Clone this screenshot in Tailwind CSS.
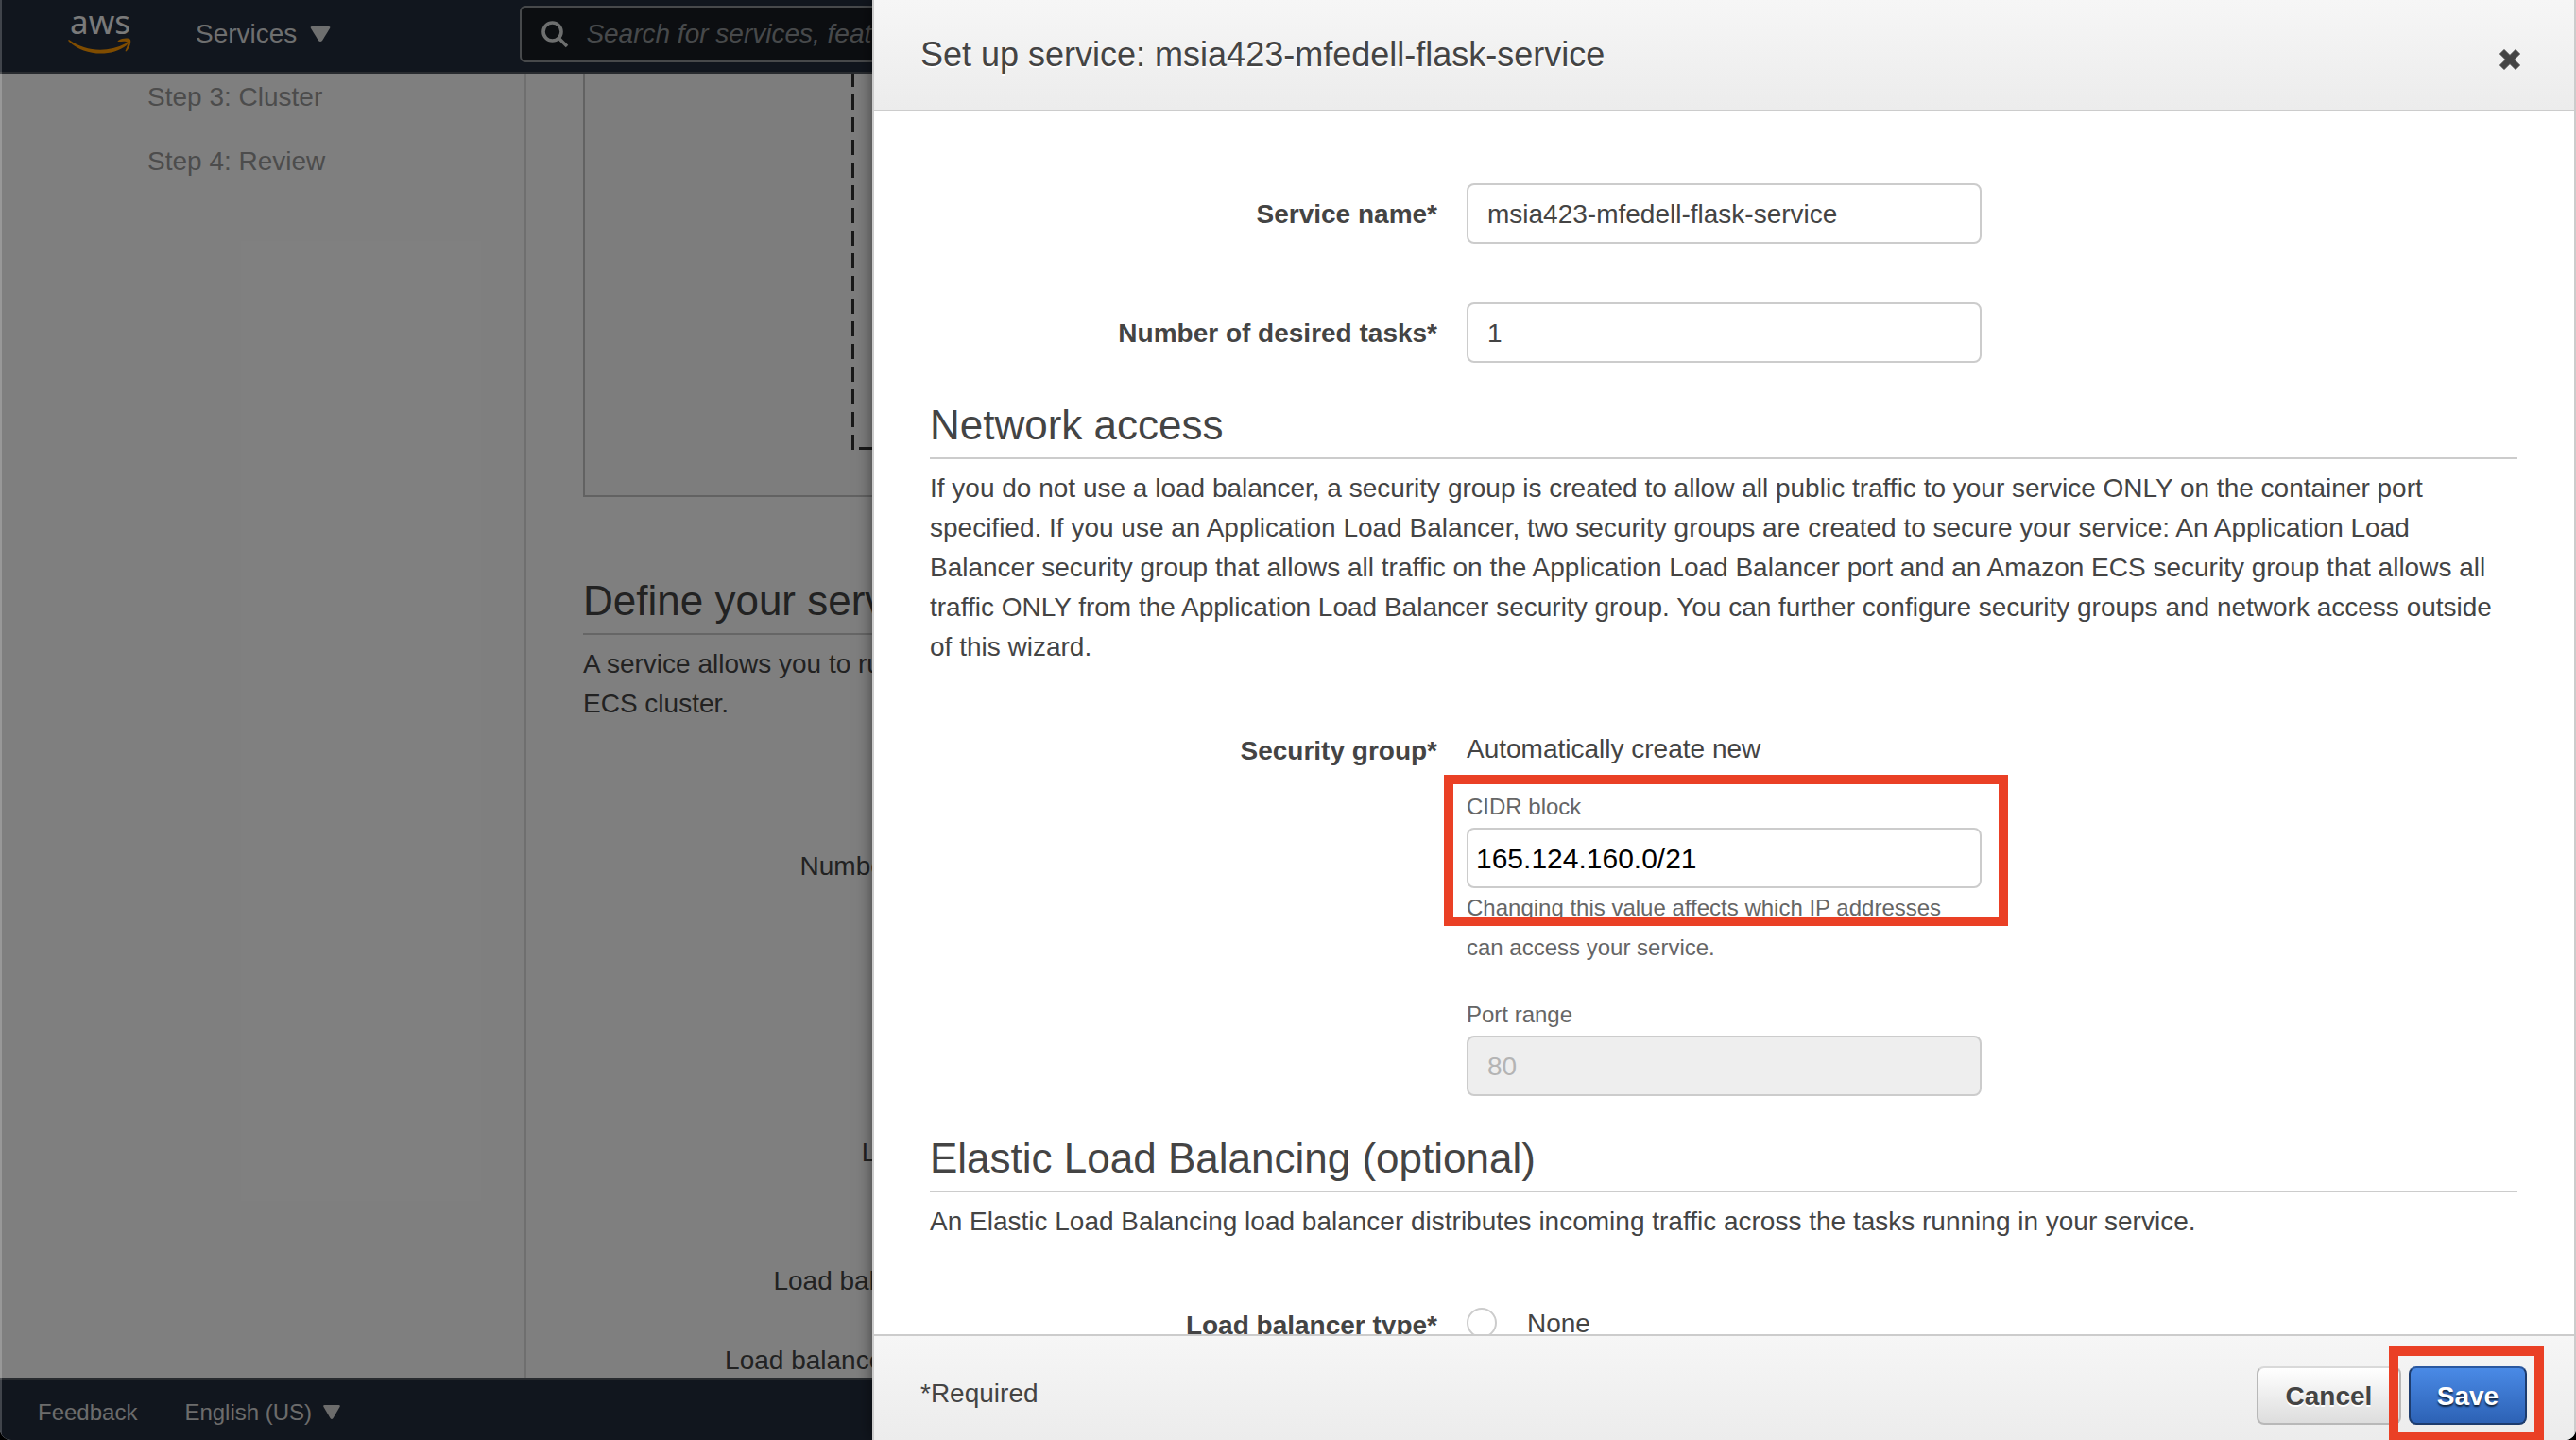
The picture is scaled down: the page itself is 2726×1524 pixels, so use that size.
<!DOCTYPE html>
<html lang="en">
<head>
<meta charset="utf-8">
<title>Set up service</title>
<script src="https://cdn.jsdelivr.net/npm/@tailwindcss/browser@4"></script>
</head>
<body class="h-screen overflow-hidden bg-black font-['Helvetica_Neue','Liberation_Sans',Arial,sans-serif] text-[28px] leading-[42px] text-[#444]">
<div class="relative h-screen overflow-hidden rounded-b-xl bg-white">

  <!-- Console page behind the dialog -->
  <div class="flex h-full flex-col">
    <header class="flex h-[78px] shrink-0 items-center border-b-2 border-[#50565e] bg-[#232c3c] pb-1 text-[#dcdedf]">
      <a href="#" aria-label="aws" class="ml-[70px] block">
        <svg class="h-12 w-[72px] overflow-visible" viewBox="0 0 72 48">
          <text x="36" y="24" text-anchor="middle" font-family="Noto Sans, sans-serif" font-size="35" fill="#f4f4f4">aws</text>
          <path d="M3 30C21 43 44 44 63 34c2-1 3 0 1 2C47 49 19 47 3 32c-1-1-1-2 0-2z" fill="#f90"/>
          <path d="M55 31c5-3 11-3 13-1 1 3-1 9-4 12-1 1-2 0-1-1 1-3 3-7 2-8-2-2-6-1-9-1-1 0-2 0-1-1z" fill="#f90"/>
        </svg>
      </a>
      <button type="button" class="ml-[65px] flex items-center gap-[14px]">Services
        <svg class="h-[18px] w-[22px]" viewBox="0 0 22 18"><path d="M2 1h18q2 0 1 2l-8 13q-2 2-4 0L1 3Q0 1 2 1z" fill="currentColor"/></svg>
      </button>
      <div class="ml-[200px] flex h-[60px] flex-1 items-center gap-[18px] rounded-md border-2 border-[#8f9396] bg-[#181d22] px-5">
        <svg class="h-[30px] w-[30px] shrink-0" viewBox="0 0 30 30" fill="none" stroke="#dcdedf" stroke-width="3.6"><circle cx="12.500" cy="12.500" r="9.500"/><path d="M19 19l9 9"/></svg>
        <input type="text" aria-label="Search" placeholder="Search for services, features" class="flex-1 bg-transparent italic placeholder:text-[#8f9396]">
      </div>
    </header>

    <div class="flex min-h-0 flex-1 overflow-hidden">
      <nav class="flex w-[557px] shrink-0 flex-col gap-[26px] border-r-2 border-[#dedede] pl-[156px] pt-1 text-[#999]">
        <a href="#">Step 3: Cluster</a>
        <a href="#">Step 4: Review</a>
      </nav>
      <main class="flex-1 pl-[60px]">
        <div class="h-[448px] border-2 border-t-0 border-[#c4c4c4] bg-[#fafafa] pl-[282px]">
          <svg class="h-[400px] w-[300px]" viewBox="0 0 300 400" fill="none" stroke="#333" stroke-width="3"><path d="M1.500 -2V398" stroke-dasharray="16 8"/><path d="M8 396.500H300" stroke-dasharray="16 8"/></svg>
        </div>
        <h2 class="mt-[84px] whitespace-nowrap border-b-2 border-[#ccc] pb-2 text-[44px] leading-[52px]">Define your service</h2>
        <p class="mt-[10px] whitespace-nowrap">A service allows you to run<br>ECS cluster.</p>
        <div class="w-[533px] whitespace-nowrap text-right">
          <p class="mt-[130px]">Number of desired tasks</p>
          <p class="mt-[261px]">Load balancer type</p>
          <p class="mt-[94px]">Load balancer listener port</p>
          <p class="mt-[42px]">Load balancer listener protocol</p>
        </div>
      </main>
    </div>

    <footer class="flex h-[66px] shrink-0 items-center border-t-2 border-[#50565e] bg-[#232c3c] pl-10 pt-[6px] text-[24px] text-[#d8d8d8]">
      <a href="#">Feedback</a>
      <button type="button" class="ml-[50px] flex items-center gap-3">English (US)
        <svg class="h-4 w-[18px]" viewBox="0 0 18 16"><path d="M1.500 0h15q2 0 1 2l-7 12q-1.500 2-3 0L.5 2Q-.5 0 1.500 0z" fill="currentColor"/></svg>
      </button>
    </footer>
  </div>

  <div class="absolute inset-0 bg-black/50"></div>
  <div class="absolute inset-y-0 left-0 w-[2px] bg-white/20"></div>

  <!-- Service dialog -->
  <section role="dialog" aria-labelledby="dialog-title" class="absolute inset-y-0 left-[923px] right-0 flex flex-col border-x-2 border-[#ccc] bg-white shadow-[0_0_16px_rgba(0,0,0,0.5)]">
    <header class="flex h-[118px] shrink-0 items-center justify-between border-b-2 border-[#ccc] bg-linear-to-b from-[#f6f6f6] to-[#ececec] pl-[49px] pr-14">
      <h1 id="dialog-title" class="text-[36px] [text-shadow:0_2px_0_#fff]">Set up service: msia423-mfedell-flask-service</h1>
      <button type="button" aria-label="Close" class="pt-[10px]">
        <svg class="h-[24px] w-[24px]" viewBox="0 0 24 24"><path d="M6 1.500L12 7.500 18 1.500 22.500 6 16.500 12 22.500 18 18 22.500 12 16.500 6 22.500 1.500 18 7.500 12 1.500 6z" fill="#444" stroke="#444" stroke-width="1" stroke-linejoin="round"/></svg>
      </button>
    </header>

    <form id="service-form" class="min-h-0 flex-1 overflow-hidden pl-[59px] pr-[60px] pt-[76px]">
      <div class="grid grid-cols-[537px_545px] items-center gap-x-[31px] gap-y-[62px]">
        <label for="service-name" class="pt-[2px] text-right font-bold">Service name*</label>
        <input id="service-name" type="text" value="msia423-mfedell-flask-service" class="h-16 w-full rounded-lg border-2 border-[#ccc] px-5 pt-[2px]">
        <label for="tasks" class="pt-[2px] text-right font-bold">Number of desired tasks*</label>
        <input id="tasks" type="text" value="1" class="h-16 w-full rounded-lg border-2 border-[#ccc] px-5 pt-[2px]">
      </div>

      <h2 class="mt-10 border-b-2 border-[#ccc] pb-2 text-[44px] leading-[52px]">Network access</h2>
      <p class="mt-[10px]">If you do not use a load balancer, a security group is created to allow all public traffic to your service ONLY on the container port specified. If you use an Application Load Balancer, two security groups are created to secure your service: An Application Load Balancer security group that allows all traffic on the Application Load Balancer port and an Amazon ECS security group that allows all traffic ONLY from the Application Load Balancer security group. You can further configure security groups and network access outside of this wizard.</p>

      <div class="mt-[66px] grid grid-cols-[537px_545px] gap-x-[31px]">
        <div class="pt-[2px] text-right font-bold">Security group*</div>
        <div>
          <p>Automatically create new</p>
          <div class="relative mt-[18px] text-[24px] text-[#666]">
            <label for="cidr" class="mb-[2px] block pt-px leading-[41px]">CIDR block</label>
            <input id="cidr" type="text" value="165.124.160.0/21" class="block h-16 w-full rounded-lg border-2 border-[#ccc] px-2 pt-[2px] text-[30px] text-black">
            <p>Changing this value affects which IP addresses can access your service.</p>
            <div class="pointer-events-none absolute -left-6 -right-7 -top-3 h-40 border-10 border-[#ea4025]"></div>
          </div>
          <div class="mt-7 text-[24px] text-[#666]">
            <label for="port" class="mb-[2px] block pt-px leading-[41px]">Port range</label>
            <input id="port" type="text" value="80" disabled class="block h-16 w-full rounded-lg border-2 border-[#ccc] bg-[#eee] px-5 pt-[2px] text-[28px] text-[#b4b4b4]">
          </div>
        </div>
      </div>

      <h2 class="mt-10 border-b-2 border-[#ccc] pb-2 text-[44px] leading-[52px]">Elastic Load Balancing (optional)</h2>
      <p class="mt-[10px]">An Elastic Load Balancing load balancer distributes incoming traffic across the tasks running in your service.</p>

      <div class="mt-[66px] grid grid-cols-[537px_545px] gap-x-[31px]">
        <div class="pt-[2px] text-right font-bold">Load balancer type*</div>
        <label class="flex items-start gap-8"><input type="radio" name="lb" class="mt-1 h-8 w-8 appearance-none rounded-full border-2 border-[#ccc] bg-white">None</label>
      </div>
    </form>

    <footer class="flex h-[112px] shrink-0 items-start justify-between border-t-2 border-[#ccc] bg-linear-to-b from-[#f6f6f6] to-[#ececec] pl-[49px] pr-[50px] pt-8">
      <p class="leading-[58px]">*Required</p>
      <div class="flex gap-2 font-bold">
        <button type="button" class="h-[62px] w-[153px] rounded-lg border-2 border-[#b8b8b8] border-t-[#d9d9d9] bg-linear-to-b from-white to-[#dddddd] pt-[2px] [text-shadow:0_2px_0_#fff]">Cancel</button>
        <div class="relative">
          <button type="submit" form="service-form" class="h-[62px] w-[125px] rounded-lg border-2 border-[#1d3c6e] border-t-[#2a58a0] bg-linear-to-b from-[#4a8ae6] to-[#2d62b5] pt-[2px] text-white [text-shadow:0_2px_2px_rgba(0,0,0,0.7)]">Save</button>
          <div class="pointer-events-none absolute -bottom-[18px] -left-[21px] -right-[18px] -top-[21px] border-10 border-[#ea4025]"></div>
        </div>
      </div>
    </footer>
  </section>
</div>
</body>
</html>
